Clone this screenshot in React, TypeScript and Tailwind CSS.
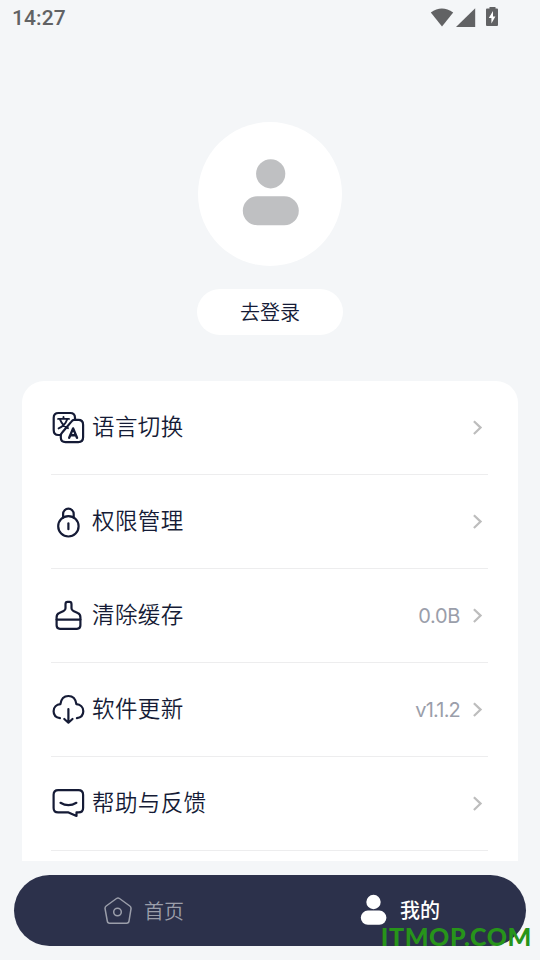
import type { ReactNode } from "react";

interface MenuItem {
  label: string;
  value?: string;
  valueClass?: string;
  icon: ReactNode;
}

const iconProps = {
  width: 34,
  height: 34,
  viewBox: "0 0 34 34",
  fill: "none",
  stroke: "currentColor",
  strokeWidth: 2.2,
  strokeLinecap: "round",
  strokeLinejoin: "round",
} as const;

function TranslateIcon() {
  return (
    <svg {...iconProps}>
      <path d="M8.6 24H7.3Q2.7 24 2.7 19V6.8Q2.7 2 7.5 2H19.2Q24 2 24 6.8V8.4" />
      <path d="M23.2 8.9H27.3Q32.1 8.9 32.1 13.7V26.3Q32.1 31.1 27.3 31.1H14.6Q9.8 31.1 9.8 26.5V24.8Q9.8 22.8 11.4 21.2L20.4 10.6Q21.7 8.9 23.2 8.9Z" />
      <path d="M7.1 7.9H18M12.5 6V7.9M9.2 8.8Q11.6 14.6 17 17.2M16 8.8Q14 14.8 7.6 17.4" strokeWidth={1.9} />
      <path d="M18.2 26.8L22.1 17.4L26 26.8M19.5 24.2H24.7" strokeWidth={2.4} />
    </svg>
  );
}

function LockIcon() {
  return (
    <svg {...iconProps}>
      <circle cx="17.4" cy="21.3" r="10.2" />
      <path d="M12.1 12.4V9A5.3 5.3 0 0 1 22.7 9V12.4" />
      <path d="M17.4 18.4V24.2" />
    </svg>
  );
}

function BrushIcon() {
  return (
    <svg {...iconProps}>
      <path d="M5.6 20.6V26.3Q5.6 29.8 9 29.8H26Q29.4 29.8 29.4 26.3V20.6" />
      <path d="M5.6 20.6V18.2Q5.6 15.1 8.3 14L12.6 12Q14.5 11.1 14.5 9.2V5.2Q14.5 2.9 16.5 2.9H18.5Q20.5 2.9 20.5 5.2V9.2Q20.5 11.1 22.4 12L26.7 14Q29.4 15.1 29.4 18.2V20.6Z" />
    </svg>
  );
}

function CloudIcon() {
  return (
    <svg {...iconProps}>
      <path d="M9 25.2C5 24.6 2.6 21.8 2.6 18.3C2.6 14.2 5.6 11.5 9.4 11.2C10.1 6 13.2 3 17.4 3C21.6 3 24.7 6 25.4 11.2C29.2 11.5 32.3 14.2 32.3 18.3C32.3 21.8 30 24.6 25.9 25.2" />
      <path d="M17.4 16V29.4M13.3 26L17.4 29.7L21.5 26" />
    </svg>
  );
}

function FeedbackIcon() {
  return (
    <svg {...iconProps}>
      <path d="M7.2 3.1H27.5Q32.1 3.1 32.1 7.7V21Q32.1 25.4 27.5 25.4H25.5V29L17.5 25.4H7.2Q2.6 25.4 2.6 21V7.7Q2.6 3.1 7.2 3.1Z" />
      <path d="M9.5 15.8Q17.4 20.6 25.4 15.8" />
    </svg>
  );
}

function ChevronIcon() {
  return (
    <svg width="10" height="16" viewBox="0 0 10 16" fill="none" stroke="#bdbdbd" strokeWidth="2.2">
      <path d="M0.9 1.2L7.6 7.6L0.9 14" />
    </svg>
  );
}

const menuItems: MenuItem[] = [
  { label: "语言切换", icon: <TranslateIcon /> },
  { label: "权限管理", icon: <LockIcon /> },
  { label: "清除缓存", value: "0.0B", valueClass: "tracking-[-0.3px]", icon: <BrushIcon /> },
  { label: "软件更新", value: "v1.1.2", valueClass: "tracking-[-0.8px]", icon: <CloudIcon /> },
  { label: "帮助与反馈", icon: <FeedbackIcon /> },
];

function StatusBar() {
  return (
    <div className="flex h-9 items-center justify-between pl-3 pr-[41px] text-[#616264]">
      <span className="font-['Roboto'] text-[21px] leading-9 font-medium tracking-[0.1px]">14:27</span>
      <svg width="69" height="22" viewBox="0 0 69 22" fill="currentColor">
        <path d="M0.8 5.6Q11.8 -2.8 23.2 5.6L12 19.5Z" />
        <path d="M45.2 1.2V20H26Z" />
        <path d="M59.5 0H65.5V1.5H67Q68 1.5 68 2.5V18Q68 19 67 19H57Q56 19 56 18V2.5Q56 1.5 57 1.5H59.5Z" />
        <path d="M63 4L58.8 11H61.4V16.4L65.4 9.4H63Z" fill="#fff" />
      </svg>
    </div>
  );
}

function MenuRow({ item }: { item: MenuItem }) {
  return (
    <div className="flex h-[94px] items-center border-b border-[#ededee] pr-[5px]">
      {item.icon}
      <span className="ml-[7px] pb-[5px] text-[22.5px] leading-[30px] font-[350] tracking-[0.4px]">{item.label}</span>
      <span className={`ml-auto mr-[13px] font-['Inter'] text-[20px] font-normal text-[#9a9eaa] ${item.valueClass ?? ""}`}>
        {item.value}
      </span>
      <ChevronIcon />
    </div>
  );
}

function BottomNav() {
  return (
    <nav className="mx-[14px] mt-[14px] flex h-[71px] rounded-full bg-[#2c314b]">
      <div className="flex flex-1 items-center pl-[90px] text-[#9b9eaa]">
        <svg width="28" height="28" viewBox="0 0 28 28" fill="none" stroke="currentColor" strokeWidth="1.5">
          <path d="M12.5 1.5Q14 0.5 15.5 1.5L25.8 9Q27.2 10 27 11.8L25 24.2Q24.7 26.3 22.6 26.3H5.6Q3.6 26.3 3.3 24.2L1.1 11.8Q0.8 10 2.2 9Z" />
          <circle cx="13.5" cy="15" r="3.8" />
        </svg>
        <span className="ml-3 text-[20px] font-[350]">首页</span>
      </div>
      <div className="flex flex-1 items-center pl-[90px] text-white">
        <svg width="27" height="34" viewBox="0 -1 27 34" fill="currentColor">
          <circle cx="13.5" cy="7" r="7.2" />
          <rect x="0.8" y="15.6" width="25.6" height="14.2" rx="7.1" />
        </svg>
        <span className="ml-[13px] pb-px text-[20px] font-medium">我的</span>
      </div>
    </nav>
  );
}

export default function App() {
  return (
    <div className="relative h-[960px] w-[540px] overflow-hidden bg-[#f4f6f8] font-['Noto_Sans_CJK_SC',sans-serif] text-[#151b36]">
      <StatusBar />

      <div className="flex flex-col items-center pt-[86px]">
        <div className="flex size-36 items-center justify-center rounded-full bg-white">
          <svg width="58" height="72" viewBox="0 -2 58 72" fill="#bfc0c2">
            <circle cx="29.7" cy="13.8" r="14.6" />
            <rect x="1.8" y="36.2" width="56" height="29" rx="14.5" />
          </svg>
        </div>
        <button className="mt-[23px] h-[46px] w-[146px] rounded-full bg-white pb-px text-[20px] font-[350]">
          去登录
        </button>
      </div>

      <div className="mx-[22px] mt-[46px] h-[480px] overflow-hidden rounded-t-[22px] bg-white pr-[30px] pl-[29px]">
        {menuItems.map((item) => (
          <MenuRow key={item.label} item={item} />
        ))}
      </div>

      <BottomNav />

      <span className="absolute right-2 bottom-[6px] font-['Lato'] text-[25px] leading-9 font-black tracking-[0.6px] text-[#27941a]">
        ITMOP.COM
      </span>
    </div>
  );
}
